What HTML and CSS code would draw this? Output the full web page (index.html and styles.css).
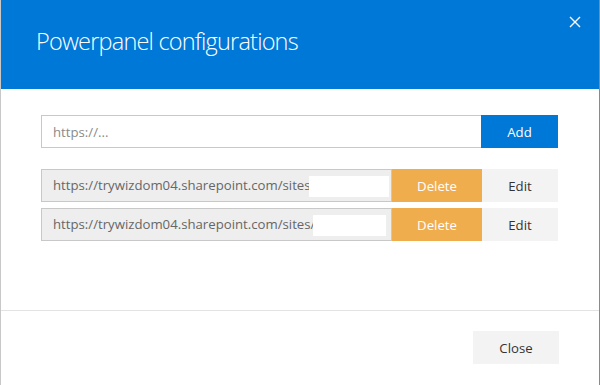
FILE: index.html
```html
<!DOCTYPE html>
<html lang="en">
<head>
<meta charset="UTF-8">
<title>Powerpanel configurations</title>
<link rel="stylesheet" href="styles.css">
</head>
<body>
<div class="dialog">
<div class="header">
<h1>Powerpanel configurations</h1>
<button class="close-x" aria-label="Close">
<svg width="12" height="12" viewBox="0 0 12 12"><path d="M1 1L11 11M11 1L1 11" stroke="#fff" stroke-width="1.4"/></svg>
</button>
</div>

<div class="content">
<div class="add-row">
<input type="text" class="url-input" placeholder="https://...">
<button class="btn btn-add">Add</button>
</div>

<div class="list">
<div class="item">
<div class="item-url">https://trywizdom04.sharepoint.com/sites<span class="mask mask-a"></span></div>
<button class="btn btn-delete">Delete</button>
<button class="btn btn-edit">Edit</button>
</div>
<div class="item">
<div class="item-url">https://trywizdom04.sharepoint.com/sites/<span class="mask mask-b"></span></div>
<button class="btn btn-delete">Delete</button>
<button class="btn btn-edit">Edit</button>
</div>
</div>
</div>

<div class="footer">
<button class="btn btn-close">Close</button>
</div>
</div>
</body>
</html>
```

FILE: styles.css
```css
body {
margin: 0;
padding: 0;
font-family: 'Open Sans', 'Noto Sans', sans-serif;
background: #fff;
color: #333;
}
.dialog {
width: 600px;
height: 385px;
box-sizing: border-box;
border-left: 1px solid #c8c8c8;
border-right: 1px solid #8a8a8a;
display: flex;
flex-direction: column;
}
.header {
background: #0078d7;
height: 89px;
display: flex;
justify-content: space-between;
padding: 0 18px 0 35px;
}
.header h1 {
margin: 0;
padding-top: 25px;
font-size: 23.5px;
font-weight: 300;
color: #fff;
letter-spacing: -0.8px;
}
.close-x {
background: none;
border: none;
padding: 0;
margin-top: 16px;
width: 12px;
height: 12px;
cursor: pointer;
}
.close-x svg {
display: block;
}
.content {
flex: 1;
padding: 26px 41px 0 40px;
border-bottom: 1px solid #e3e3e3;
}
.add-row {
display: flex;
height: 33px;
}
.url-input {
flex: 1;
box-sizing: border-box;
height: 33px;
border: 1px solid #c8c8c8;
border-right: none;
padding: 0 11px;
font-family: inherit;
font-size: 13.2px;
color: #333;
outline: none;
}
.url-input::placeholder {
color: #8a8a8a;
}
.btn {
border: none;
font-family: inherit;
font-size: 13.2px;
cursor: pointer;
padding: 0;
}
.btn-add {
width: 77px;
background: #0078d7;
color: #fff;
}
.list {
margin-top: 21px;
display: flex;
flex-direction: column;
gap: 6px;
}
.item {
display: flex;
height: 33px;
}
.item-url {
width: 351px;
box-sizing: border-box;
background: #eee;
border: 1px solid #c8c8c8;
padding: 0 11px;
font-size: 13.2px;
color: #666;
line-height: 31px;
white-space: nowrap;
overflow: hidden;
position: relative;
}
.mask {
position: absolute;
background: #fff;
}
.mask-a {
left: 267px;
top: 6px;
width: 80px;
height: 21px;
}
.mask-b {
left: 271px;
top: 6px;
width: 73px;
height: 21px;
}
.btn-delete {
width: 90px;
background: #f0ad4e;
color: #fff;
}
.btn-edit {
width: 76px;
background: #f3f3f3;
color: #333;
}
.footer {
height: 74px;
display: flex;
justify-content: flex-end;
align-items: flex-start;
padding: 20px 40px 0 0;
box-sizing: border-box;
}
.btn-close {
width: 86px;
height: 33px;
background: #f3f3f3;
color: #333;
}
```
